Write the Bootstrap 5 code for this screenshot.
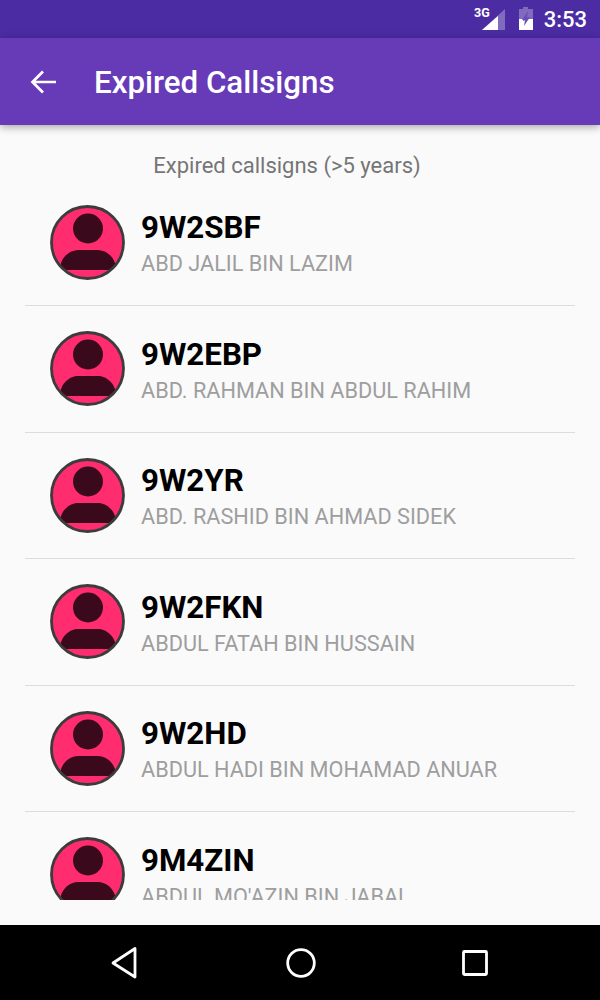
<!DOCTYPE html>
<html lang="en">
<head>
<meta charset="utf-8">
<title>Expired Callsigns</title>
<link href="https://cdn.jsdelivr.net/npm/bootstrap@5.3.0/dist/css/bootstrap.min.css" rel="stylesheet">
<style>
html,body{height:1000px;overflow:hidden}
body{background:#fafafb;font-family:Roboto,"Liberation Sans",sans-serif}
.phone{width:600px;height:1000px}
.statusbar{height:38px;background:#4b2ca3;color:#fff;font-size:22px;padding-right:13px}
.appbar{height:87px;background:#673ab7;color:#fff;box-shadow:0 2px 8px rgba(0,0,0,.35);position:relative;z-index:2}
.backbtn{width:94px;padding-left:30px}
.apptitle{font-size:31.3px;font-weight:500;line-height:1;margin-top:3px}
.content{height:775px;overflow:hidden}
.listhead{color:#757575;font-size:22px;height:54.500px;padding-top:28px;padding-right:26px;line-height:26px}
.itemrow{height:126.6px;margin:0 25px;border-bottom:1.5px solid #dcdcdc;padding-left:25px;padding-top:25px}
.itemrow:last-child{border-bottom:0}
.avatarsvg{width:75px;height:75px;flex:none}
.itemtext{margin-left:16px}
.callsign{font-size:31.3px;font-weight:700;color:#000;line-height:34px;margin-top:6.500px}
.opname{font-size:21.7px;color:#9e9e9e;line-height:26px;margin-top:6px;white-space:nowrap}
.navspacer{height:25px}
.navbottom{height:75px;background:#000;padding:0 107px 0 108px}
.stime{font-size:22px;font-weight:500;margin-left:10px}
.tag3g{font-size:12.500px;font-weight:700;line-height:1;margin-right:-12px;margin-top:-12px}
.batteryicon{margin-left:12px}
</style>
</head>
<body>
<div class="phone d-flex flex-column">
  <div class="statusbar d-flex align-items-center justify-content-end">
    <span class="tag3g">3G</span>
    <svg width="28" height="24" viewBox="0 0 28 24"><path d="M27 2V23H4Z" fill="#fff" fill-opacity=".3"/><path d="M20 9V23H4L20 9Z" fill="#fff"/></svg>
    <svg width="16" height="24" viewBox="0 0 16 24" class="batteryicon"><path d="M5 0H10V2H15V23H1V2H5Z" fill="#fff" fill-opacity=".3"/><path d="M1 12H5L5 14L11 12H15V23H1Z" fill="#fff"/><path d="M10 4L4 13H7L6 19L12 10H9Z" fill="#6b4db8"/></svg>
    <span class="stime">3:53</span>
  </div>
  <div class="appbar d-flex align-items-center">
    <div class="backbtn d-flex align-items-center">
      <svg width="28" height="26" viewBox="0 0 28 26"><path d="M26 13H3M13 2.500 2.500 13 13 23.500" fill="none" stroke="#fff" stroke-width="2.700"/></svg>
    </div>
    <div class="apptitle">Expired Callsigns</div>
  </div>
  <div class="content">
    <div class="listhead text-center">Expired callsigns (&gt;5 years)</div>
    <div class="itemrow d-flex"><svg class="avatarsvg" viewBox="0 0 75 75"><use href="#av"/></svg><div class="itemtext"><div class="callsign">9W2SBF</div><div class="opname">ABD JALIL BIN LAZIM</div></div></div>
    <div class="itemrow d-flex"><svg class="avatarsvg" viewBox="0 0 75 75"><use href="#av"/></svg><div class="itemtext"><div class="callsign">9W2EBP</div><div class="opname">ABD. RAHMAN BIN ABDUL RAHIM</div></div></div>
    <div class="itemrow d-flex"><svg class="avatarsvg" viewBox="0 0 75 75"><use href="#av"/></svg><div class="itemtext"><div class="callsign">9W2YR</div><div class="opname">ABD. RASHID BIN AHMAD SIDEK</div></div></div>
    <div class="itemrow d-flex"><svg class="avatarsvg" viewBox="0 0 75 75"><use href="#av"/></svg><div class="itemtext"><div class="callsign">9W2FKN</div><div class="opname">ABDUL FATAH BIN HUSSAIN</div></div></div>
    <div class="itemrow d-flex"><svg class="avatarsvg" viewBox="0 0 75 75"><use href="#av"/></svg><div class="itemtext"><div class="callsign">9W2HD</div><div class="opname">ABDUL HADI BIN MOHAMAD ANUAR</div></div></div>
    <div class="itemrow d-flex"><svg class="avatarsvg" viewBox="0 0 75 75"><use href="#av"/></svg><div class="itemtext"><div class="callsign">9M4ZIN</div><div class="opname">ABDUL MO'AZIN BIN JABAL</div></div></div>
  </div>
  <div class="navspacer"></div>
  <div class="navbottom d-flex align-items-center justify-content-between">
    <svg width="36" height="36" viewBox="0 0 36 36"><path d="M27 3.500V32L5 18Z" fill="none" stroke="#fff" stroke-width="2.800" stroke-linejoin="round"/></svg>
    <svg width="32" height="32" viewBox="0 0 32 32"><circle cx="16" cy="16" r="13.300" fill="none" stroke="#fff" stroke-width="2.800"/></svg>
    <svg width="36" height="36" viewBox="0 0 36 36"><rect x="6.500" y="6.500" width="23" height="23" rx="1" fill="none" stroke="#fff" stroke-width="2.800"/></svg>
  </div>
</div>
<svg width="0" height="0" class="d-block"><defs>
  <clipPath id="cc"><circle cx="37.500" cy="37.500" r="36"/></clipPath>
  <g id="av">
    <circle cx="37.500" cy="37.500" r="36" fill="#ff2d6f"/>
    <g clip-path="url(#cc)" fill="#3a0a1c">
      <circle cx="38" cy="23.500" r="15"/>
      <path d="M10 65C10 52 20 45 28 45H48C56 45 66 52 66 65Z"/>
    </g>
    <circle cx="37.500" cy="37.500" r="36" fill="none" stroke="#3c3c3c" stroke-width="2.800"/>
  </g>
</defs></svg>
</body>
</html>
